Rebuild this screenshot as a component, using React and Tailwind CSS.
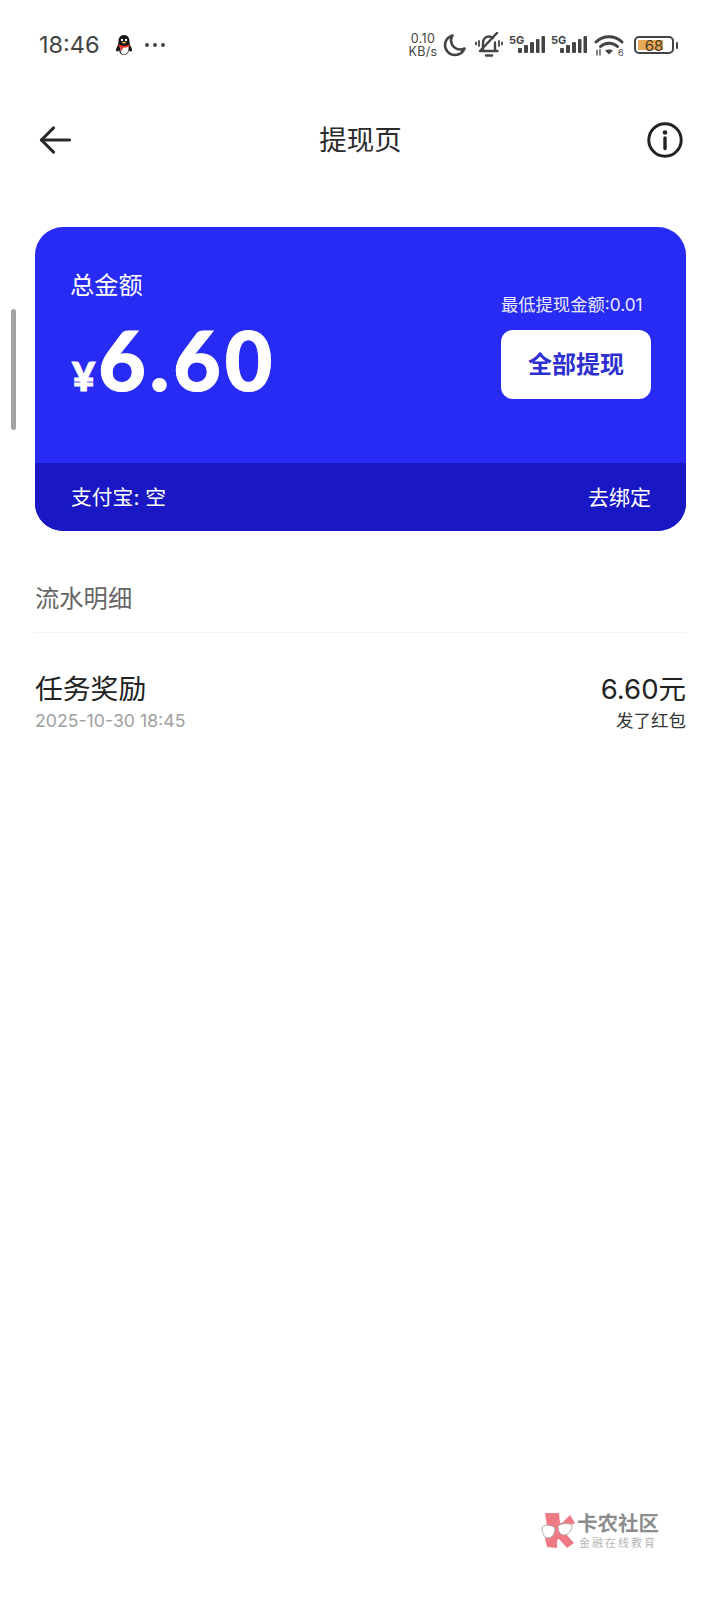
const SANS = "font-['Inter','Noto_Sans_CJK_SC',sans-serif]";

function Penguin() {
  return (
    <svg width="18" height="22" viewBox="0 0 18 22" className="ml-[15px]">
      <path d="M9 1C5 1 3.5 4 3.5 7.5C3.5 9.5 3 11 1.5 14C0.5 16 1 18 2.5 17.5L4 16.5C5 19.5 6.5 21 9 21C11.5 21 13 19.5 14 16.5L15.5 17.5C17 18 17.5 16 16.5 14C15 11 14.5 9.5 14.5 7.5C14.5 4 13 1 9 1Z" fill="#141414" />
      <path d="M4.5 12C6 16 5 20 9 20.5C13 20 14 16 13.5 12Z" fill="#fff" />
      <path d="M3.5 10.5C7 12 11 12 14.5 10.5L14.5 12.5C11 14 7 14 3.5 12.5Z" fill="#e0302a" />
      <path d="M5.5 12.5L8 13L7 17L5 15Z" fill="#e0302a" />
      <circle cx="7" cy="6" r="1.2" fill="#fff" />
      <circle cx="11" cy="6" r="1.2" fill="#fff" />
      <path d="M6.5 8.5C8 7.5 10 7.5 11.5 8.5C10 10 8 10 6.5 8.5Z" fill="#e9b44c" />
    </svg>
  );
}

function Moon() {
  return (
    <svg width="24" height="24" viewBox="0 0 24 24" fill="none">
      <path d="M9.5 2.5C5 4 2 7.5 2 12C2 17.5 6.5 22 12 22C16.5 22 20 19.3 21.5 15.5C20 16.2 18.5 16.5 17 16.5C12.5 16.5 8.5 13 8 8C7.8 6 8.4 4 9.5 2.5Z" stroke="#444" strokeWidth="2.6" strokeLinejoin="round" />
    </svg>
  );
}

function MutedBell() {
  return (
    <svg width="28" height="26" viewBox="0 0 28 26" fill="none" stroke="#444" strokeLinecap="round">
      <path d="M8 18.5V11C8 7 10.5 4.5 14 4.5C15.5 4.5 17 5 18 6M20 10.5V18.5" strokeWidth="2.4" />
      <path d="M5.5 19H22.5" strokeWidth="2.4" />
      <path d="M11 23.5H17" strokeWidth="2.4" />
      <path d="M22 1L5 19" strokeWidth="2.4" />
      <path d="M4 9V14M1 10.5V12.5M24 9V14M27 10.5V12.5" strokeWidth="1.8" />
    </svg>
  );
}

function Signal() {
  return (
    <svg width="37" height="24" viewBox="0 0 37 24">
      <text x="0" y="11.5" fontSize="11" fontWeight="700" fill="#444" fontFamily="Inter, sans-serif">5G</text>
      <rect x="9" y="16" width="4" height="5" rx="1" fill="#444" />
      <rect x="15" y="13" width="4" height="8" rx="1" fill="#444" />
      <rect x="21" y="10" width="4" height="11" rx="1" fill="#444" />
      <rect x="27" y="7" width="3.5" height="14" rx="1" fill="#444" />
      <rect x="32.5" y="4" width="3.5" height="17" rx="1" fill="#444" />
    </svg>
  );
}

function Wifi() {
  return (
    <svg width="30" height="22" viewBox="0 0 30 22" fill="none" stroke="#444" strokeLinecap="round">
      <path d="M2 8C9 1 21 1 28 8" strokeWidth="3" />
      <path d="M6.5 12.5C11 8 19 8 23.5 12.5" strokeWidth="3" />
      <path d="M11 16.5C13 15 17 15 19 16.5L15 20.5Z" fill="#444" stroke="none" />
      <path d="M3 16.5V21M6 15.5V21" strokeWidth="1.3" />
      <text x="24" y="21.5" fontSize="9" fill="#444" stroke="none" fontFamily="Inter, sans-serif">6</text>
    </svg>
  );
}

function Battery() {
  return (
    <div className="flex items-center ml-[10px]">
      <div className="relative flex h-[18px] w-[40px] items-center justify-center rounded-[5px] border-2 border-[#444] overflow-hidden">
        <div className="absolute inset-y-[2px] left-[2px] w-[25px] bg-[#e9a95c]" />
        <span className="relative text-[15px] leading-none text-[#4a3a20]">68</span>
      </div>
      <div className="ml-[2px] h-[7px] w-[2px] rounded-sm bg-[#444]" />
    </div>
  );
}

function StatusBar() {
  return (
    <div className="flex h-[90px] items-center pl-[39px] pr-[42px] text-[#444]">
      <span className="text-[23.5px] leading-none">18:46</span>
      <Penguin />
      <div className="ml-[12px] flex gap-[4px]">
        <span className="h-[4px] w-[4px] rounded-full bg-[#444]" />
        <span className="h-[4px] w-[4px] rounded-full bg-[#444]" />
        <span className="h-[4px] w-[4px] rounded-full bg-[#444]" />
      </div>
      <div className="ml-auto flex items-center">
        <div className="w-[30px] text-center text-[12.5px] leading-[13px] tracking-[0.3px]">
          <div>0.10</div>
          <div>KB/s</div>
        </div>
        <div className="ml-[5px]"><Moon /></div>
        <div className="ml-[8px]"><MutedBell /></div>
        <div className="mb-[2px] ml-[6px] flex gap-[5px]">
          <Signal />
          <Signal />
        </div>
        <div className="ml-[6px]"><Wifi /></div>
        <Battery />
      </div>
    </div>
  );
}

function Header() {
  return (
    <div className="mt-[22px] flex h-[56px] items-center pl-[39px] pr-[36px]">
      <div className="w-[39px]">
        <svg width="33" height="30" viewBox="0 0 34 30" fill="none" stroke="#2b2b2b" strokeWidth="3.2" strokeLinecap="round" strokeLinejoin="round">
          <path d="M2.5 15H31.5" />
          <path d="M15 2.5L2.5 15L15 27.5" />
        </svg>
      </div>
      <h1 className="flex-1 pr-[3px] pt-[2px] text-center text-[27.5px] font-normal leading-none text-[#2b2b2b]">提现页</h1>
      <svg width="38" height="38" viewBox="0 0 38 38" fill="none">
        <circle cx="19" cy="19" r="16.2" stroke="#222" strokeWidth="3" />
        <circle cx="19" cy="11.5" r="2.3" fill="#222" />
        <path d="M19 17V27.5" stroke="#222" strokeWidth="3.4" strokeLinecap="round" />
      </svg>
    </div>
  );
}

function BalanceCard() {
  return (
    <div className="ml-[35px] mr-[34px] mt-[59px] overflow-hidden rounded-[28px] bg-[#272bf3] text-white">
      <div className="flex h-[236px] justify-between pl-[35px] pr-[35px]">
        <div>
          <div className="mt-[44px] text-[24.3px] leading-[28px]">总金额</div>
          <div className="mt-[18px] flex items-baseline font-['Lato',sans-serif] font-black">
            <span className="ml-[2px] text-[40px] leading-none [-webkit-text-stroke:1px_white]">¥</span>
            <span className="ml-[3px] text-[82px] leading-[84px] tracking-[4px] [-webkit-text-stroke:1px_white]">6.60</span>
          </div>
        </div>
        <div className="w-[150px]">
          <div className="mt-[68px] whitespace-nowrap text-[17.3px] leading-[20px] text-white/90">最低提现金额:0.01</div>
          <button className="mt-[15px] flex h-[69px] w-[150px] items-center justify-center rounded-[12px] bg-white text-[24px] font-bold text-[#2d2fd0]">
            全部提现
          </button>
        </div>
      </div>
      <div className="flex h-[68px] items-center justify-between bg-[#1a18c4] pl-[36px] pr-[35px] pt-[2px] text-[20.8px]">
        <span>支付宝: 空</span>
        <span className="text-[21px]">去绑定</span>
      </div>
    </div>
  );
}

function Ledger() {
  return (
    <div className="mt-[50px]">
      <div className="mx-[35px] text-[24.3px] leading-[34px] text-[#666]">流水明细</div>
      <div className="ml-[33px] mt-[17px] h-[1px] w-[654px] bg-[#f5f5f5]" />
      <div className="ml-[35px] mr-[34px] mt-[38px] flex justify-between">
        <div>
          <div className="text-[27.8px] leading-[36px] text-[#222]">任务奖励</div>
          <div className="mt-[2px] text-[17.7px] leading-[24px] text-[#a0a0a0]">2025-10-30 18:45</div>
        </div>
        <div className="text-right">
          <div className="text-[27.5px] leading-[36px] text-[#222]">6.60元</div>
          <div className="mt-[2px] text-[17.5px] leading-[24px] text-[#333]">发了红包</div>
        </div>
      </div>
    </div>
  );
}

function Watermark() {
  return (
    <div className="absolute left-[541px] top-[1512px] flex items-center opacity-80">
      <svg width="36" height="36" viewBox="0 0 36 36">
        <path d="M4 0H18L19 10L21 10L29 2L34 10L24 15L24 20L33 30L26 35L18 26L16 27V35L6 34L4 25L6 13Z" fill="#ea5a68" />
        <path d="M1 14C5 11 11 12 14 15C14 21 11 25 7 25C3 25 1 20 1 14Z" fill="#fff" stroke="#888" strokeWidth="0.8" />
        <path d="M17 13C21 10 27 10 31 12C31 18 27 22 23 22C19 22 17 18 17 13Z" fill="#fff" stroke="#888" strokeWidth="0.8" />
      </svg>
      <div className="pt-[1px]">
        <div className="text-[20.5px] font-bold leading-[22px] text-[#707070]">卡农社区</div>
        <div className="mt-[2px] ml-[2px] text-[11px] leading-[13px] tracking-[2px] text-[#a5a5a5] whitespace-nowrap">金融在线教育</div>
      </div>
    </div>
  );
}

export default function App() {
  return (
    <div className={`relative h-[1600px] w-[720px] overflow-hidden bg-white ${SANS}`}>
      <StatusBar />
      <Header />
      <BalanceCard />
      <Ledger />
      <div className="absolute left-[11px] top-[309px] h-[121px] w-[5px] rounded-full bg-[#a3a3a3]" />
      <Watermark />
    </div>
  );
}
